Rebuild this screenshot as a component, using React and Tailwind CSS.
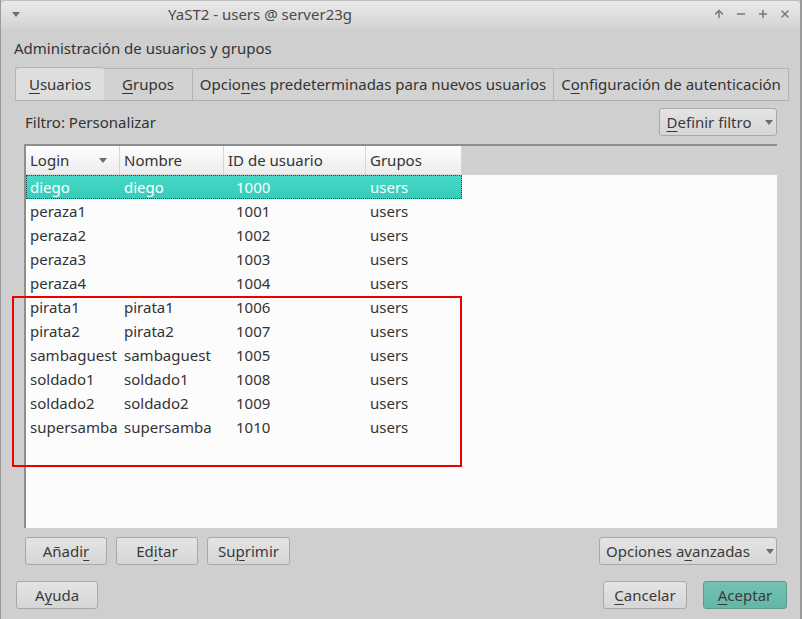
import { ArrowUp, Minus, Plus, X } from 'lucide-react';

const font = { fontFamily: '"Noto Sans", "Open Sans", sans-serif' };

const users = [
  ['diego', 'diego', '1000', 'users'],
  ['peraza1', '', '1001', 'users'],
  ['peraza2', '', '1002', 'users'],
  ['peraza3', '', '1003', 'users'],
  ['peraza4', '', '1004', 'users'],
  ['pirata1', 'pirata1', '1006', 'users'],
  ['pirata2', 'pirata2', '1007', 'users'],
  ['sambaguest', 'sambaguest', '1005', 'users'],
  ['soldado1', 'soldado1', '1008', 'users'],
  ['soldado2', 'soldado2', '1009', 'users'],
  ['supersamba', 'supersamba', '1010', 'users'],
];

const Mn = ({ children }) => <span className="underline underline-offset-[3px] decoration-1">{children}</span>;

const Caret = () => (
  <span className="w-0 h-0 border-l-[4px] border-r-[4px] border-t-[5px] border-l-transparent border-r-transparent border-t-[#6b6b6b]" />
);

const Btn = ({ children, className = '' }) => (
  <button
    type="button"
    className={`h-[28px] rounded-[3px] border border-[#a8a8a8] bg-gradient-to-b from-[#e4e4e4] to-[#d6d6d6] text-[#3a3a3a] text-[15px] flex items-center justify-center ${className}`}
  >
    {children}
  </button>
);

const Tab = ({ children, active, className = '' }) => (
  <div
    className={`h-[33px] flex items-center justify-center border border-[#b4b4b4] border-b-[#b0b0b0] text-[15px] text-[#333] ${
      active ? 'bg-[#dedede] rounded-t-[3px] -mt-[1px] h-[34px]' : 'bg-[#d2d2d2] border-l-0'
    } ${className}`}
  >
    {children}
  </div>
);

const cols = ['w-[94px] pl-[4px]', 'w-[104px] pl-[4px]', 'w-[142px] pl-[12px]', 'w-[96px] pl-[4px]'];

const App = () => {
  return (
    <div className="w-[802px] h-[619px] bg-[#cfcfcf] relative overflow-hidden flex flex-col border-l border-r-2 border-[#9a9a9a]" style={font}>
      <div className="h-[28px] shrink-0 bg-gradient-to-b from-[#eaeaea] to-[#d4d4d4] flex items-center relative rounded-t-[4px] border-t border-[#bdbdbd]">
        <span className="absolute left-[11px] top-[11px] w-0 h-0 border-l-[4px] border-r-[4px] border-t-[5px] border-l-transparent border-r-transparent border-t-[#6e6e6e]" />
        <div className="pl-[167px] text-[15px] text-[#4a4a4a]">YaST2 - users @ server23g</div>
        <div className="absolute right-[9px] top-[7px] flex items-center gap-[10px] text-[#777]">
          <ArrowUp size={12} strokeWidth={3} />
          <Minus size={12} strokeWidth={3} />
          <Plus size={12} strokeWidth={3} />
          <X size={12} strokeWidth={3} />
        </div>
      </div>

      <div className="px-[13px] pt-[9px] text-[15px] text-[#333] leading-[22px]">Administración de usuarios y grupos</div>

      <div className="flex mt-[9px] ml-[14px] items-end">
        <Tab active className="w-[89px] border-r-0"><Mn>U</Mn>suarios</Tab>
        <Tab className="w-[89px] border-l"><Mn>G</Mn>rupos</Tab>
        <Tab className="w-[361px]">Opcio<Mn>n</Mn>es predeterminadas para nuevos usuarios</Tab>
        <Tab className="w-[235px]">C<Mn>o</Mn>nfiguración de autenticación</Tab>
      </div>

      <div className="flex items-center justify-between pl-[24px] pr-[23px] mt-[7px] h-[28px]">
        <span className="text-[15px] text-[#333]">Filtro: Personalizar</span>
        <Btn className="w-[118px] gap-[14px] pl-[4px]"><span><Mn>D</Mn>efinir filtro</span><Caret /></Btn>
      </div>

      <div className="mx-[23px] mt-[8px] h-[384px] border-t-2 border-l-2 border-[#8e8e8e] bg-[#fcfcfc] flex flex-col">
        <div className="flex h-[29px] bg-[#d0d0d0] shrink-0">
          <div className="flex bg-gradient-to-b from-[#fefefe] to-[#ececec] border-b border-[#d8d8d8]">
            {['Login', 'Nombre', 'ID de usuario', 'Grupos'].map((h, i) => (
              <div key={h} className={`${cols[i]} ${i === 2 ? '!pl-[4px]' : ''} h-full flex items-center justify-between text-[15px] text-[#333] border-r border-[#d6d6d6] pr-[12px]`}>
                {h}
                {i === 0 && <Caret />}
              </div>
            ))}
          </div>
        </div>
        <div className="relative flex-1">
          {users.map((u, r) => (
            <div
              key={u[0]}
              className={`flex h-[24px] items-center text-[15px] w-fit ${
                r === 0 ? 'bg-gradient-to-b from-[#46d9c8] to-[#37cbb9] text-white outline outline-1 outline-dotted outline-[#1f4f48] -outline-offset-1' : 'text-[#333]'
              }`}
            >
              {u.map((c, i) => (
                <div key={i} className={`${cols[i]} whitespace-nowrap`}>{c}</div>
              ))}
            </div>
          ))}
        </div>
      </div>

      <div className="absolute left-[11px] top-[296px] w-[450px] h-[171px] border-2 border-[#ee0000]" />

      <div className="flex items-center pl-[24px] pr-[23px] mt-[9px] h-[28px]">
        <div className="flex gap-[9px]">
          <Btn className="w-[82px]">Añadi<Mn>r</Mn></Btn>
          <Btn className="w-[82px]">Ed<Mn>i</Mn>tar</Btn>
          <Btn className="w-[83px]">Su<Mn>p</Mn>rimir</Btn>
        </div>
        <Btn className="ml-auto w-[178px] gap-[16px] pl-[4px]"><span>Opciones a<Mn>v</Mn>anzadas</span><Caret /></Btn>
      </div>

      <div className="flex items-center pl-[15px] pr-[13px] mt-[16px] h-[28px]">
        <Btn className="w-[82px]">A<Mn>y</Mn>uda</Btn>
        <Btn className="ml-auto w-[84px]"><Mn>C</Mn>ancelar</Btn>
        <Btn className="ml-[16px] w-[84px] !from-[#72c2b4] !to-[#66b6a8] !border-[#5a9a8f]"><Mn>A</Mn>ceptar</Btn>
      </div>
    </div>
  );
};

export default App;
